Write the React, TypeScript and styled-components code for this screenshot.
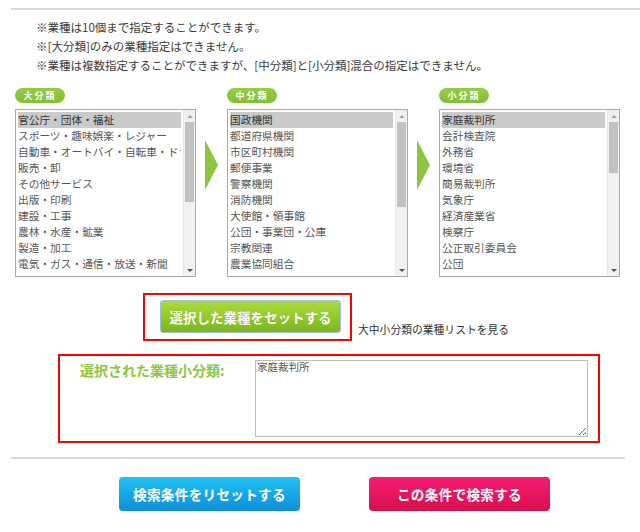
import React from "react";
import styled, { createGlobalStyle } from "styled-components";

const Global = createGlobalStyle`
  html, body { margin: 0; padding: 0; background: #fff; }
  body { font-family: "Noto Sans CJK JP", "Noto Sans", sans-serif; color: #333; }
  * { box-sizing: border-box; }
`;

const Page = styled.div`
  width: 640px;
  height: 532px;
  overflow: hidden;
  padding-top: 8px;
`;

const Rule = styled.hr<{ $right: number; $top: number }>`
  margin: ${(p) => p.$top}px ${(p) => p.$right}px 0 11px;
  border: 0;
  height: 2px;
  background: #d8d8d8;
`;

const Notes = styled.ul`
  list-style: none;
  margin: 8px 0 0;
  padding: 0 0 0 36px;
  font-size: 11.5px;
  line-height: 19px;
  color: #3a3a3a;
`;

const Selectors = styled.div`
  display: flex;
  align-items: flex-start;
  margin-top: 13px;
  padding-left: 15px;
`;

const Column = styled.div`
  display: flex;
  flex-direction: column;
  width: 181px;
`;

const Badge = styled.div`
  width: 50px;
  height: 15px;
  border-radius: 8px;
  background: linear-gradient(#94cc45, #84bf36);
  color: #fff;
  font-size: 9px;
  font-weight: 700;
  letter-spacing: 2px;
  line-height: 15px;
  text-align: center;
  margin-bottom: 6px;
`;

const ListBox = styled.div`
  display: flex;
  height: 168px;
  border: 1px solid #a9a9a9;
  background: #fff;
`;

const Options = styled.div`
  flex: 1;
  min-width: 0;
  overflow: hidden;
  padding: 2px 2px 0;
`;

const Option = styled.div<{ $selected?: boolean }>`
  height: 16px;
  line-height: 16px;
  font-size: 10.7px;
  white-space: nowrap;
  overflow: hidden;
  color: ${(p) => (p.$selected ? "#333" : "#555")};
  background: ${(p) => (p.$selected ? "#cacaca" : "transparent")};
`;

const Scroll = styled.div`
  width: 12px;
  display: flex;
  flex-direction: column;
  background: #f1f1f1;
  border-left: 1px solid #e8e8e8;
`;

const ScrollBtn = styled.div<{ $down?: boolean }>`
  height: 12px;
  display: flex;
  align-items: center;
  justify-content: center;
  &::after {
    content: "";
    width: 0;
    height: 0;
    border-left: 3px solid transparent;
    border-right: 3px solid transparent;
    ${(p) =>
      p.$down
        ? "border-top: 3px solid #505050;"
        : "border-bottom: 3px solid #a3a3a3;"}
  }
`;

const Track = styled.div`
  flex: 1;
  padding: 0 1px;
`;

const Thumb = styled.div`
  background: #c1c1c1;
  width: 100%;
`;

const Arrow = styled.svg`
  flex: none;
  margin: 52px 9px 0;
  width: 13px;
  height: 50px;
`;

const SetRow = styled.div`
  display: flex;
  align-items: flex-end;
  margin-top: 16px;
  padding-left: 143px;
`;

const RedFrame = styled.div`
  border: 2px solid #ff0000;
`;

const SetFrame = styled(RedFrame)`
  padding: 5px 9px 6px 15px;
`;

const SetButton = styled.button`
  width: 181px;
  height: 33px;
  border: 1px solid #9cc0e6;
  border-radius: 3px;
  background: linear-gradient(#a9dc3a, #7cb61d);
  color: #fff;
  font-family: inherit;
  font-size: 13.5px;
  font-weight: 700;
  padding: 0;
  text-shadow: 0 0 1px rgba(0, 0, 0, 0.15);
`;

const ListLink = styled.span`
  margin: 0 0 5px 6px;
  font-size: 10.8px;
  line-height: 14px;
  color: #333;
`;

const SelectedFrame = styled(RedFrame)`
  display: flex;
  justify-content: space-between;
  align-items: flex-start;
  width: 542px;
  margin: 13px 0 0 58px;
  padding: 4px 10px 4px 20px;
`;

const SelectedLabel = styled.div`
  font-size: 14px;
  font-weight: 700;
  line-height: 20px;
  color: #8cc63f;
`;

const SelectedArea = styled.textarea`
  width: 333px;
  height: 77px;
  border: 1px solid #bcbcbc;
  padding: 0 1px;
  font-family: inherit;
  font-size: 10.5px;
  line-height: 12px;
  color: #555;
  outline: none;
`;

const ButtonRow = styled.div`
  display: flex;
  gap: 69px;
  margin-top: 18px;
  padding-left: 119px;
`;

const ActionButton = styled.button<{ $tone: "blue" | "pink" }>`
  width: 181px;
  height: 34px;
  border: 0;
  border-radius: 4px;
  padding: 0;
  color: #fff;
  font-family: inherit;
  font-size: 13.6px;
  font-weight: 700;
  letter-spacing: 0.3px;
  background: ${(p) =>
    p.$tone === "blue"
      ? "linear-gradient(#21c2f4, #0e8fd8)"
      : "linear-gradient(#f41d73, #d80f4d)"};
`;

type ListData = { badge: string; items: string[]; thumb: number };

const lists: ListData[] = [
  {
    badge: "大分類",
    thumb: 80,
    items: [
      "官公庁・団体・福祉",
      "スポーツ・趣味娯楽・レジャー",
      "自動車・オートバイ・自転車・ドラ",
      "販売・卸",
      "その他サービス",
      "出版・印刷",
      "建設・工事",
      "農林・水産・鉱業",
      "製造・加工",
      "電気・ガス・通信・放送・新聞",
    ],
  },
  {
    badge: "中分類",
    thumb: 85,
    items: [
      "国政機関",
      "都道府県機関",
      "市区町村機関",
      "郵便事業",
      "警察機関",
      "消防機関",
      "大使館・領事館",
      "公団・事業団・公庫",
      "宗教関連",
      "農業協同組合",
    ],
  },
  {
    badge: "小分類",
    thumb: 51,
    items: [
      "家庭裁判所",
      "会計検査院",
      "外務省",
      "環境省",
      "簡易裁判所",
      "気象庁",
      "経済産業省",
      "検察庁",
      "公正取引委員会",
      "公団",
    ],
  },
];

const GreenArrow = () => (
  <Arrow viewBox="0 0 13 50">
    <polygon points="0,0 13,25 0,50" fill="#8cc63f" />
  </Arrow>
);

const Selector = ({ data }: { data: ListData }) => (
  <Column>
    <Badge>{data.badge}</Badge>
    <ListBox>
      <Options>
        {data.items.map((t, i) => (
          <Option key={t} $selected={i === 0}>
            {t}
          </Option>
        ))}
      </Options>
      <Scroll>
        <ScrollBtn />
        <Track>
          <Thumb style={{ height: data.thumb }} />
        </Track>
        <ScrollBtn $down />
      </Scroll>
    </ListBox>
  </Column>
);

export default function App() {
  return (
    <Page>
      <Global />
      <Rule $top={0} $right={0} />
      <Notes>
        <li>※業種は10個まで指定することができます。</li>
        <li>※[大分類]のみの業種指定はできません。</li>
        <li>※業種は複数指定することができますが、[中分類]と[小分類]混合の指定はできません。</li>
      </Notes>
      <Selectors>
        <Selector data={lists[0]} />
        <GreenArrow />
        <Selector data={lists[1]} />
        <GreenArrow />
        <Selector data={lists[2]} />
      </Selectors>
      <SetRow>
        <SetFrame>
          <SetButton type="button">選択した業種をセットする</SetButton>
        </SetFrame>
        <ListLink>大中小分類の業種リストを見る</ListLink>
      </SetRow>
      <SelectedFrame>
        <SelectedLabel>選択された業種小分類:</SelectedLabel>
        <SelectedArea readOnly defaultValue="家庭裁判所" />
      </SelectedFrame>
      <Rule $top={14} $right={15} />
      <ButtonRow>
        <ActionButton type="button" $tone="blue">
          検索条件をリセットする
        </ActionButton>
        <ActionButton type="button" $tone="pink">
          この条件で検索する
        </ActionButton>
      </ButtonRow>
    </Page>
  );
}
